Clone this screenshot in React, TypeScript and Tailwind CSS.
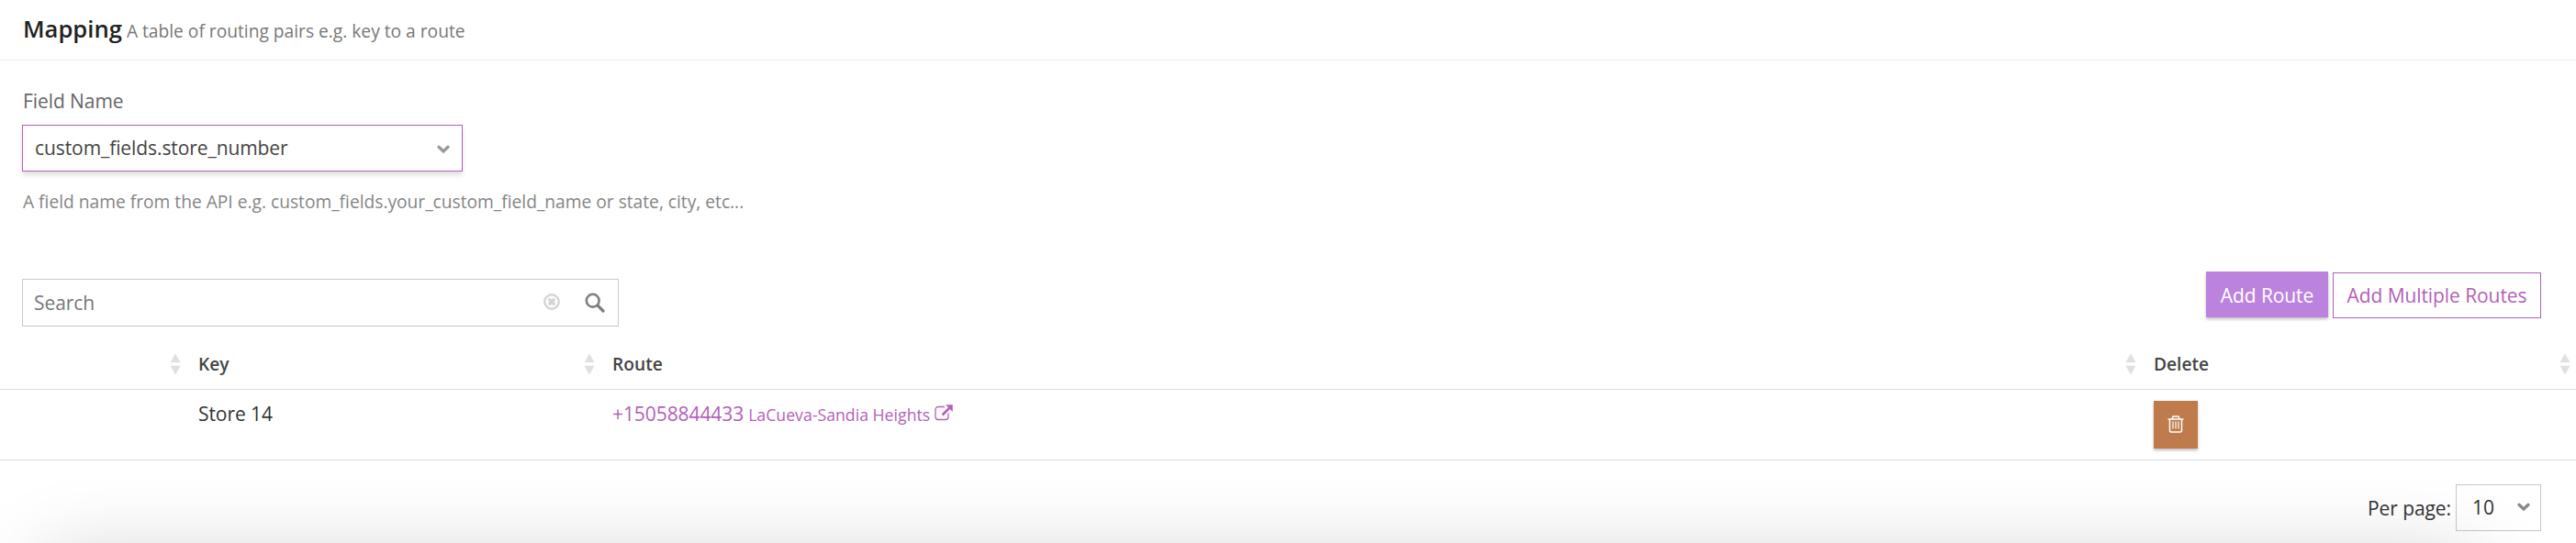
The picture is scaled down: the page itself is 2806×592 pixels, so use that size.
import React from "react";

function SortArrows() {
  return (
    <svg width="12" height="24" viewBox="0 0 12 24" className="-mt-0.5 block shrink-0 fill-[#e0e0e0]">
      <path d="M6 0.5 L11.5 10.3 H0.5 Z" />
      <path d="M6 23.5 L11.5 13.7 H0.5 Z" />
    </svg>
  );
}

function Chevron({ className }: { className?: string }) {
  return (
    <svg width="14" height="10" viewBox="0 0 14 10" fill="none" className={className}>
      <path d="M2 2.3 L7 7 L12 2.3" stroke="currentColor" strokeWidth="3.3" strokeLinecap="round" />
    </svg>
  );
}

function HeaderCell({ label, className }: { label?: string; className: string }) {
  return (
    <div className={`flex items-center justify-between ${className}`}>
      <span className="-mt-[3px]">{label}</span>
      <SortArrows />
    </div>
  );
}

export default function App() {
  return (
    <div className="relative h-[592px] w-[2806px] overflow-hidden bg-white font-['Open_Sans',sans-serif] text-[21px] leading-7 tracking-[-0.08px] text-[#333]">
      {/* Section title */}
      <header className="flex h-[66px] items-baseline border-b border-[#f0f0f7] pt-[18px] pl-[25px] tracking-normal">
        <h1 className="text-[25.6px] font-semibold text-[#222]">Mapping</h1>
        <span className="ml-[5px] text-[19.2px] text-[#777]">
          A table of routing pairs e.g. key to a route
        </span>
      </header>

      {/* Field name */}
      <section className="h-[230px] pt-[29px] pl-6">
        <label className="block h-[41px] pt-px pl-px text-[#666]">Field Name</label>
        <button className="flex h-[51px] w-[480px] items-center justify-between border border-[#b35fb8] bg-white pr-[13px] pb-px pl-[13px] text-[#444] shadow-[0_4px_5px_rgba(0,0,0,0.12)]">
          custom_fields.store_number
          <Chevron className="mt-1 text-[#9a9a9a]" />
        </button>
        <p className="mt-[19px] pl-px text-[19.2px] tracking-normal text-[#858585]">
          A field name from the API e.g. custom_fields.your_custom_field_name or state, city, etc...
        </p>
      </section>

      {/* Toolbar */}
      <div className="flex h-[76px] items-start justify-between pr-[38px] pl-6">
        <div className="mt-2 flex h-[52px] w-[650px] items-center border border-[#c8c8c8] bg-white pr-[14px] pl-3">
          <span className="flex-1 text-[#777]">Search</span>
          <svg width="18" height="18" viewBox="0 0 18 18" fill="none" stroke="#d5d5d5" className="mr-[27px] mb-0.5">
            <circle cx="9" cy="9" r="7.7" strokeWidth="2.4" />
            <path d="M5.8 5.8 L12.2 12.2 M12.2 5.8 L5.8 12.2" strokeWidth="3.4" />
          </svg>
          <svg width="22" height="22" viewBox="0 0 22 22" fill="none" stroke="#808080">
            <circle cx="8.7" cy="8.7" r="6.9" strokeWidth="2.6" />
            <path d="M14 14 L20 20" strokeWidth="3.2" strokeLinecap="round" />
          </svg>
        </div>
        <div className="flex gap-[5px]">
          <button className="h-[50px] w-[133px] bg-[#bb83de] pt-0.5 text-white shadow-[0_2px_3px_rgba(0,0,0,0.25)]">
            Add Route
          </button>
          <button className="mt-px h-[50px] w-[227px] border border-[#b35fb8] text-[#b35fb8]">
            Add Multiple Routes
          </button>
        </div>
      </div>

      {/* Routes table */}
      <div className="flex h-[53px] border-b border-[#dcdcdc] text-[19.2px] font-semibold tracking-normal text-[#444]">
        <HeaderCell className="w-[197px]" />
        <HeaderCell className="ml-[19px] w-[432px]" label="Key" />
        <HeaderCell className="ml-[19px] w-[1660px]" label="Route" />
        <HeaderCell className="ml-[19px] w-[454px]" label="Delete" />
      </div>
      <div className="flex h-[77px] border-b border-[#dcdcdc]">
        <div className="w-[216px]" />
        <div className="w-[451px] pt-3">Store 14</div>
        <div className="flex w-[1679px] items-baseline pt-3 text-[#b35fb8]">
          <a>+15058844433</a>
          <a className="ml-[5px] text-[17.6px] tracking-[0.05px]">LaCueva-Sandia Heights</a>
          <svg width="20" height="18" viewBox="0 0 20 18" fill="none" stroke="currentColor" className="ml-[5px]">
            <path d="M11 2.5 H4 A3 3 0 0 0 1 5.5 V13.5 A3 3 0 0 0 4 16.5 H12 A3 3 0 0 0 15 13.5 V9.5" strokeWidth="1.3" />
            <path d="M8.5 11.5 L16 4" strokeWidth="2.6" />
            <path d="M12 0.3 H19.7 V8 Z" fill="currentColor" stroke="none" />
          </svg>
        </div>
        <button className="mt-3 flex h-[52px] w-12 items-center justify-center bg-[#bf7b4b] shadow-[0_2px_3px_rgba(0,0,0,0.25)]">
          <svg width="18" height="20" viewBox="0 0 18 20" fill="none" stroke="#fff" strokeWidth="1.5" className="-mt-[3px]">
            <path d="M0.5 5 H17.5 M5 5 L6 2 H12 L13 5" />
            <path d="M2.5 5 V17.5 A1.5 1.5 0 0 0 4 19 H14 A1.5 1.5 0 0 0 15.5 17.5 V5" />
            <path d="M6 7.5 V15.5 M9 7.5 V15.5 M12 7.5 V15.5" strokeWidth="1.2" />
          </svg>
        </button>
      </div>

      {/* Pagination */}
      <footer className="flex items-start justify-end pt-[26px] pr-[38px]">
        <span className="pt-3">Per page:</span>
        <button className="ml-[5px] flex h-[51px] w-[93px] items-center justify-between border border-[#c8c8c8] pr-[11px] pb-px pl-[17px]">
          10
          <Chevron className="text-[#8a8a8a]" />
        </button>
      </footer>

      {/* Soft shadow rising from the bottom edge */}
      <div className="pointer-events-none absolute top-full right-[110px] left-[46px] h-40 shadow-[0_14px_88px_rgba(0,0,0,0.18)]" />
    </div>
  );
}
